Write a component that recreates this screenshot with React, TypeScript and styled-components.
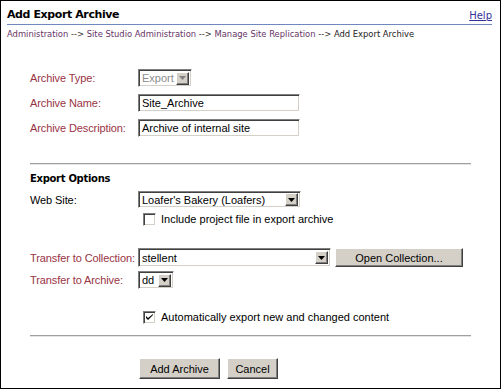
import React from "react";
import styled, { createGlobalStyle } from "styled-components";

const GlobalStyle = createGlobalStyle`
  html, body {
    margin: 0;
    padding: 0;
    background: #fff;
  }
`;

const maroon = "#993344";
const face = "#d4d0c8";

const Page = styled.div`
  width: 501px;
  height: 389px;
  box-sizing: border-box;
  border: 1px solid #000;
  background: #fff;
  overflow: hidden;
  font-family: "Liberation Sans", Arial, sans-serif;
  font-size: 11px;
  color: #000;
`;

const Header = styled.div`
  padding: 0 8px 0 6px;
`;

const TitleRow = styled.div`
  display: flex;
  justify-content: space-between;
  align-items: flex-end;
  height: 24px;
  box-sizing: border-box;
  padding-bottom: 3px;
  border-bottom: 1px solid #7088c0;
`;

const Title = styled.h1`
  margin: 0;
  font-family: "DejaVu Sans", Verdana, sans-serif;
  font-size: 11px;
  font-weight: bold;
  letter-spacing: -0.4px;
`;

const HelpLink = styled.a`
  font-family: "DejaVu Sans", Verdana, sans-serif;
  font-size: 10px;
  color: #333399;
  text-decoration: underline;
`;

const Crumbs = styled.div`
  margin-top: 4px;
  font-family: "DejaVu Sans", Verdana, sans-serif;
  font-size: 8.4px;
  color: #333;
`;

const Crumb = styled.a<{ $current?: boolean }>`
  color: ${(p) => (p.$current ? "#222" : "#663366")};
  text-decoration: none;
`;

const Form = styled.div`
  padding: 0 29px;
`;

const Row = styled.div<{ $top: number; $h: number }>`
  display: flex;
  align-items: center;
  margin-top: ${(p) => p.$top}px;
  height: ${(p) => p.$h}px;
`;

const Label = styled.div<{ $plain?: boolean }>`
  width: 108px;
  flex: none;
  letter-spacing: -0.1px;
  color: ${(p) => (p.$plain ? "#000" : maroon)};
`;

const Indent = styled.div<{ $w?: number }>`
  width: ${(p) => p.$w ?? 108}px;
  flex: none;
`;

const TextBox = styled.div<{ $w: number }>`
  width: ${(p) => p.$w}px;
  height: 100%;
  box-sizing: border-box;
  border: 1px solid;
  border-color: #808080 #fff #fff #808080;
  box-shadow: inset 1px 1px 0 #404040, inset -1px -1px 0 ${face};
  padding: 0 3px;
  display: flex;
  align-items: center;
  font-size: 11px;
  white-space: nowrap;
  overflow: hidden;
`;

const SelectBox = styled(TextBox)<{ $disabled?: boolean }>`
  padding: 0 2px 0 3px;
  justify-content: space-between;
  color: ${(p) => (p.$disabled ? "#8c8c8c" : "#000")};
`;

const ArrowBtn = styled.span`
  width: 13px;
  height: 13px;
  flex: none;
  box-sizing: border-box;
  background: ${face};
  border: 1px solid;
  border-color: #fff #404040 #404040 #fff;
  box-shadow: inset -1px -1px 0 #808080;
  display: flex;
  align-items: center;
  justify-content: center;
`;

const Arrow = ({ disabled }: { disabled?: boolean }) => (
  <ArrowBtn>
    <svg width="7" height="4" viewBox="0 0 7 4">
      <path d="M0 0h7L3.5 4z" fill={disabled ? "#808080" : "#000"} />
    </svg>
  </ArrowBtn>
);

const Rule = styled.div<{ $top: number }>`
  margin-top: ${(p) => p.$top}px;
  width: 441px;
  height: 2px;
  box-sizing: border-box;
  border-top: 1px solid #a0a0a0;
  border-bottom: 1px solid #e4e4e4;
`;

const Section = styled.div<{ $top: number }>`
  margin-top: ${(p) => p.$top}px;
  font-family: "DejaVu Sans", Verdana, sans-serif;
  font-size: 10px;
  font-weight: bold;
  letter-spacing: -0.3px;
  height: 14px;
  line-height: 14px;
`;

const CheckLine = styled.label`
  display: flex;
  align-items: center;
  gap: 5px;
  padding-left: 5px;
`;

const CheckBox = styled.span`
  width: 13px;
  height: 13px;
  box-sizing: border-box;
  border: 1px solid;
  border-color: #808080 #fff #fff #808080;
  box-shadow: inset 1px 1px 0 #404040, inset -1px -1px 0 ${face};
  background: #fff;
  display: flex;
  align-items: center;
  justify-content: center;
`;

const Check = ({ checked }: { checked?: boolean }) => (
  <CheckBox>
    {checked && (
      <svg width="7" height="7" viewBox="0 0 7 7">
        <path d="M0 2v2l2 2 5-5V0L2 4z" fill="#000" />
      </svg>
    )}
  </CheckBox>
);

const Button = styled.button<{ $w: number }>`
  width: ${(p) => p.$w}px;
  height: 100%;
  box-sizing: border-box;
  background: ${face};
  border: 1px solid;
  border-color: #fff #404040 #404040 #fff;
  box-shadow: inset -1px -1px 0 #808080;
  font-family: "Liberation Sans", Arial, sans-serif;
  font-size: 11px;
  color: #000;
  padding: 0;
`;

const ButtonGap = styled.div`
  display: flex;
  gap: 7px;
  height: 100%;
`;

export default function App() {
  return (
    <Page>
      <GlobalStyle />
      <Header>
        <TitleRow>
          <Title>Add Export Archive</Title>
          <HelpLink href="#">Help</HelpLink>
        </TitleRow>
        <Crumbs>
          <Crumb href="#">Administration</Crumb> --&gt;{" "}
          <Crumb href="#">Site Studio Administration</Crumb> --&gt;{" "}
          <Crumb href="#">Manage Site Replication</Crumb> --&gt;{" "}
          <Crumb $current>Add Export Archive</Crumb>
        </Crumbs>
      </Header>
      <Form>
        <Row $top={30} $h={18}>
          <Label>Archive Type:</Label>
          <SelectBox $w={54} $disabled>
            Export
            <Arrow disabled />
          </SelectBox>
        </Row>
        <Row $top={7} $h={18}>
          <Label>Archive Name:</Label>
          <TextBox $w={162}>Site_Archive</TextBox>
        </Row>
        <Row $top={7} $h={18}>
          <Label>Archive Description:</Label>
          <TextBox $w={162}>Archive of internal site</TextBox>
        </Row>
        <Rule $top={26} />
        <Section $top={7}>Export Options</Section>
        <Row $top={5} $h={17}>
          <Label $plain>Web Site:</Label>
          <SelectBox $w={163}>
            Loafer's Bakery (Loafers)
            <Arrow />
          </SelectBox>
        </Row>
        <Row $top={4} $h={14}>
          <Indent />
          <CheckLine>
            <Check />
            Include project file in export archive
          </CheckLine>
        </Row>
        <Row $top={22} $h={19}>
          <Label>Transfer to Collection:</Label>
          <SelectBox $w={193}>
            stellent
            <Arrow />
          </SelectBox>
          <Indent $w={4} />
          <Button $w={128}>Open Collection...</Button>
        </Row>
        <Row $top={4} $h={18}>
          <Label>Transfer to Archive:</Label>
          <SelectBox $w={36}>
            dd
            <Arrow />
          </SelectBox>
        </Row>
        <Row $top={21} $h={14}>
          <Indent />
          <CheckLine>
            <Check checked />
            Automatically export new and changed content
          </CheckLine>
        </Row>
        <Rule $top={11} />
        <Row $top={21} $h={21}>
          <Indent $w={109} />
          <ButtonGap>
            <Button $w={81}>Add Archive</Button>
            <Button $w={51}>Cancel</Button>
          </ButtonGap>
        </Row>
      </Form>
    </Page>
  );
}
